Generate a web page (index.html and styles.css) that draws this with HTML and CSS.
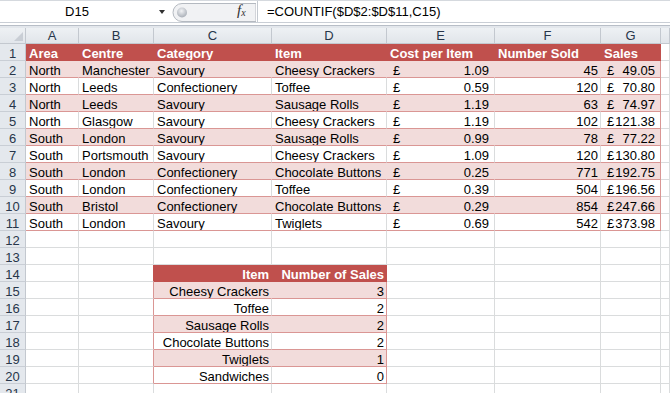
FILE: index.html
```html
<!DOCTYPE html>
<html>
<head>
    <title>Sales - COUNTIF</title>
    <meta charset="UTF-8">
    <link rel="stylesheet" href="styles.css">
</head>
<body>
  <div class="formula-bar">
    <div class="namebox">D15</div>
    <div class="nb-drop"><span class="arrow"></span></div>
    <div class="splitter">
      <svg width="86" height="22" viewBox="0 0 86 22">
        <defs>
          <radialGradient id="dot" cx="0.45" cy="0.35" r="0.7">
            <stop offset="0" stop-color="#f2f3f5"/>
            <stop offset="1" stop-color="#a4aab3"/>
          </radialGradient>
        </defs>
        <path d="M12 2.5 H86 V20.5 H12 A9 9 0 0 1 12 2.5 Z" fill="#f1f2f4" stroke="#b4b9c0"/>
        <circle cx="12" cy="11.5" r="5" fill="url(#dot)"/>
      </svg>
      <span class="fx">f<sub>x</sub></span>
    </div>
    <div class="formula">=COUNTIF($D$2:$D$11,C15)</div>
  </div>
  <div class="bar-gap"></div>

  <div class="sheet">
    <!-- cabecalho das colunas -->
    <div class="corner"><span class="tri"></span></div>
    <div class="ch">A</div><div class="ch">B</div><div class="ch">C</div><div class="ch">D</div>
    <div class="ch">E</div><div class="ch">F</div><div class="ch">G</div><div class="ch"></div>

    <!-- tabela 1 -->
    <div class="rh">1</div>
    <div class="c th">Area</div><div class="c th">Centre</div><div class="c th">Category</div><div class="c th">Item</div>
    <div class="c th">Cost per Item</div><div class="c th">Number Sold</div><div class="c th last">Sales</div><div class="c"></div>

    <div class="rh">2</div>
    <div class="c band">North</div><div class="c band">Manchester</div><div class="c band">Savoury</div><div class="c band">Cheesy Crackers</div>
    <div class="c band acc"><span>£</span><span>1.09</span></div><div class="c band r">45</div><div class="c band acc last"><span>£</span><span>49.05</span></div><div class="c"></div>

    <div class="rh">3</div>
    <div class="c row">North</div><div class="c row">Leeds</div><div class="c row">Confectionery</div><div class="c row">Toffee</div>
    <div class="c row acc"><span>£</span><span>0.59</span></div><div class="c row r">120</div><div class="c row acc last"><span>£</span><span>70.80</span></div><div class="c"></div>

    <div class="rh">4</div>
    <div class="c band">North</div><div class="c band">Leeds</div><div class="c band">Savoury</div><div class="c band">Sausage Rolls</div>
    <div class="c band acc"><span>£</span><span>1.19</span></div><div class="c band r">63</div><div class="c band acc last"><span>£</span><span>74.97</span></div><div class="c"></div>

    <div class="rh">5</div>
    <div class="c row">North</div><div class="c row">Glasgow</div><div class="c row">Savoury</div><div class="c row">Cheesy Crackers</div>
    <div class="c row acc"><span>£</span><span>1.19</span></div><div class="c row r">102</div><div class="c row acc last"><span>£</span><span>121.38</span></div><div class="c"></div>

    <div class="rh">6</div>
    <div class="c band">South</div><div class="c band">London</div><div class="c band">Savoury</div><div class="c band">Sausage Rolls</div>
    <div class="c band acc"><span>£</span><span>0.99</span></div><div class="c band r">78</div><div class="c band acc last"><span>£</span><span>77.22</span></div><div class="c"></div>

    <div class="rh">7</div>
    <div class="c row">South</div><div class="c row">Portsmouth</div><div class="c row">Savoury</div><div class="c row">Cheesy Crackers</div>
    <div class="c row acc"><span>£</span><span>1.09</span></div><div class="c row r">120</div><div class="c row acc last"><span>£</span><span>130.80</span></div><div class="c"></div>

    <div class="rh">8</div>
    <div class="c band">South</div><div class="c band">London</div><div class="c band">Confectionery</div><div class="c band">Chocolate Buttons</div>
    <div class="c band acc"><span>£</span><span>0.25</span></div><div class="c band r">771</div><div class="c band acc last"><span>£</span><span>192.75</span></div><div class="c"></div>

    <div class="rh">9</div>
    <div class="c row">South</div><div class="c row">London</div><div class="c row">Confectionery</div><div class="c row">Toffee</div>
    <div class="c row acc"><span>£</span><span>0.39</span></div><div class="c row r">504</div><div class="c row acc last"><span>£</span><span>196.56</span></div><div class="c"></div>

    <div class="rh">10</div>
    <div class="c band">South</div><div class="c band">Bristol</div><div class="c band">Confectionery</div><div class="c band">Chocolate Buttons</div>
    <div class="c band acc"><span>£</span><span>0.29</span></div><div class="c band r">854</div><div class="c band acc last"><span>£</span><span>247.66</span></div><div class="c"></div>

    <div class="rh">11</div>
    <div class="c row">South</div><div class="c row">London</div><div class="c row">Savoury</div><div class="c row">Twiglets</div>
    <div class="c row acc"><span>£</span><span>0.69</span></div><div class="c row r">542</div><div class="c row acc last"><span>£</span><span>373.98</span></div><div class="c"></div>

    <div class="rh">12</div>
    <div class="c"></div><div class="c"></div><div class="c"></div><div class="c"></div><div class="c"></div><div class="c"></div><div class="c"></div><div class="c"></div>

    <div class="rh">13</div>
    <div class="c"></div><div class="c"></div><div class="c"></div><div class="c"></div><div class="c"></div><div class="c"></div><div class="c"></div><div class="c"></div>

    <!-- tabela 2 -->
    <div class="rh">14</div>
    <div class="c"></div><div class="c edge-h"></div><div class="c th r">Item</div><div class="c th r last">Number of Sales</div>
    <div class="c"></div><div class="c"></div><div class="c"></div><div class="c"></div>

    <div class="rh">15</div>
    <div class="c"></div><div class="c edge"></div><div class="c band r">Cheesy Crackers</div><div class="c band r last">3</div>
    <div class="c"></div><div class="c"></div><div class="c"></div><div class="c"></div>

    <div class="rh">16</div>
    <div class="c"></div><div class="c edge"></div><div class="c row r">Toffee</div><div class="c row r last">2</div>
    <div class="c"></div><div class="c"></div><div class="c"></div><div class="c"></div>

    <div class="rh">17</div>
    <div class="c"></div><div class="c edge"></div><div class="c band r">Sausage Rolls</div><div class="c band r last">2</div>
    <div class="c"></div><div class="c"></div><div class="c"></div><div class="c"></div>

    <div class="rh">18</div>
    <div class="c"></div><div class="c edge"></div><div class="c row r">Chocolate Buttons</div><div class="c row r last">2</div>
    <div class="c"></div><div class="c"></div><div class="c"></div><div class="c"></div>

    <div class="rh">19</div>
    <div class="c"></div><div class="c edge"></div><div class="c band r">Twiglets</div><div class="c band r last">1</div>
    <div class="c"></div><div class="c"></div><div class="c"></div><div class="c"></div>

    <div class="rh">20</div>
    <div class="c"></div><div class="c edge"></div><div class="c row r">Sandwiches</div><div class="c row r last">0</div>
    <div class="c"></div><div class="c"></div><div class="c"></div><div class="c"></div>

    <div class="rh">21</div>
    <div class="c"></div><div class="c"></div><div class="c"></div><div class="c"></div><div class="c"></div><div class="c"></div><div class="c"></div><div class="c"></div>
  </div>
</body>
</html>
```

FILE: styles.css
```css
body {
  font-family: "Liberation Sans", Arial, sans-serif;
  font-size: 13px;
  margin: 0;
  padding: 0;
  background: #ffffff;
  color: #000000;
  overflow: hidden;
}

/* barra de formula */
.formula-bar {
  display: flex;
  height: 22px;
  border-top: 1px solid #d5d9de;
  border-bottom: 1px solid #c9ced5;
  box-sizing: border-box;
  height: 23px;
}
.namebox {
  width: 153px;
  text-align: center;
  line-height: 21px;
  padding-left: 1px;
  box-sizing: border-box;
}
.nb-drop {
  width: 18px;
  display: flex;
  align-items: center;
  padding-left: 6px;
  box-sizing: border-box;
}
.arrow {
  width: 0;
  height: 0;
  border-left: 3.5px solid transparent;
  border-right: 3.5px solid transparent;
  border-top: 4px solid #303030;
}
.splitter {
  width: 86px;
  display: flex;
  align-items: center;
  border-right: 1px solid #c4c9d0;
}
.splitter svg {
  display: block;
  flex: none;
  margin-left: -1px;
}
.fx {
  margin-left: -19px;
  font-family: "Liberation Serif", serif;
  font-style: italic;
  font-size: 15px;
  color: #303030;
  line-height: 21px;
}
.fx sub {
  font-size: 10px;
  vertical-align: -1px;
}
.formula {
  flex: 1;
  padding-left: 9px;
  line-height: 21px;
}
.bar-gap {
  height: 4px;
  border-top: 1px solid #ffffff;
  border-bottom: 1px solid #b8bec7;
  background: #ffffff;
  box-sizing: border-box;
  height: 3px;
  margin-bottom: 2px;
  box-shadow: 0 2px 0 #e3e7ec;
}

/* planilha */
.sheet {
  display: grid;
  grid-template-columns: 26px 53px 75px 118px 115px 108px 106px 60px 1fr;
  grid-template-rows: 16px;
  grid-auto-rows: 17px;
}
.sheet > div {
  box-sizing: border-box;
  white-space: nowrap;
  overflow: hidden;
}
.corner {
  background: linear-gradient(#eef1f4, #e2e6eb);
  border-right: 1px solid #c3c8cf;
  border-bottom: 1px solid #c3c8cf;
  display: flex;
  align-items: flex-end;
  justify-content: flex-end;
  padding: 0 2px 2px 0;
}
.tri {
  width: 0;
  height: 0;
  border-left: 9px solid transparent;
  border-bottom: 9px solid #c9ced5;
}
.ch {
  background: linear-gradient(#eef1f4, #e1e5ea);
  border-right: 1px solid #c3c8cf;
  border-bottom: 1px solid #c3c8cf;
  text-align: center;
  line-height: 15px;
  color: #27364a;
}
.rh {
  background: #e4e8ed;
  border-right: 1px solid #c3c8cf;
  border-bottom: 1px solid #c9ced5;
  text-align: center;
  padding-top: 3px;
  line-height: 13px;
  color: #27364a;
}
.c {
  border-right: 1px solid #dadcdd;
  border-bottom: 1px solid #dadcdd;
  padding: 3px 3px 0 3px;
  line-height: 13px;
}
.r {
  text-align: right;
  padding-right: 2px;
}
.acc {
  display: flex;
  justify-content: space-between;
  padding: 3px 5px 0 6px;
}
.th {
  background: #c0504d;
  color: #ffffff;
  font-weight: bold;
  border-right-color: #c0504d;
  border-bottom-color: #c0504d;
}
.band {
  background: #f2dcdb;
  border-right-color: #f2dcdb;
  border-bottom-color: #da9694;
}
.row {
  border-bottom-color: #da9694;
}
.last {
  border-right-color: #da9694;
}
.th.last {
  border-right-color: #c0504d;
}
.edge {
  border-right-color: #da9694;
}
.edge-h {
  border-right-color: #c0504d;
}
```
